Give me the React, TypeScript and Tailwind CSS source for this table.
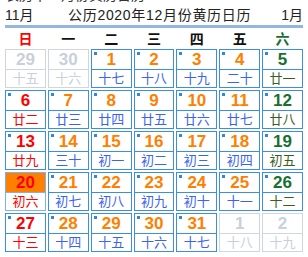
type Day = { d: number; lunar: string; other?: boolean; today?: boolean };

const lunarDec = [
  "十七", "十八", "十九", "二十", "廿一", "廿二", "廿三", "廿四", "廿五", "廿六",
  "廿七", "廿八", "廿九", "三十", "初一", "初二", "初三", "初四", "初五", "初六",
  "初七", "初八", "初九", "初十", "十一", "十二", "十三", "十四", "十五", "十六", "十七",
];

const days: Day[] = [
  { d: 29, lunar: "十五", other: true },
  { d: 30, lunar: "十六", other: true },
  ...lunarDec.map((l, i) => ({ d: i + 1, lunar: l, today: i + 1 === 20 })),
  { d: 1, lunar: "十八", other: true },
  { d: 2, lunar: "十九", other: true },
];

const weekdays = ["日", "一", "二", "三", "四", "五", "六"];

function Cell({ day, col }: { day: Day; col: number }) {
  if (day.other) {
    return (
      <div className="h-[39px] border border-[#cfd6df] flex flex-col">
        <div className="h-[19px] flex items-center justify-center text-[17px] font-bold text-[#c8d0da] leading-none">
          {day.d}
        </div>
        <div className="h-[18px] border-t border-[#cfd6df] flex items-center justify-center text-[13px] text-[#c8d0da] leading-none">
          {day.lunar}
        </div>
      </div>
    );
  }

  const numColor = col === 0 ? "text-[#ff0000]" : col === 6 ? "text-[#17702f]" : "text-[#ff8000]";
  const lunarColor = col === 0 ? "text-[#ff0000]" : col === 6 ? "text-[#3a5e1c]" : "text-[#3a63f0]";

  return (
    <div
      className={`relative h-[39px] border flex flex-col ${day.today ? "border-[#7fb0e8]" : "border-[#3a8ee8]"}`}
    >
      {!day.today && <span className="absolute left-[2px] top-[2px] w-[3px] h-[3px] bg-[#2f86e8]" />}
      <div
        className={`h-[19px] flex items-center justify-center text-[17px] font-bold leading-none ${
          day.today ? "bg-[#ff8000] text-[#ff0000]" : numColor
        }`}
      >
        {day.d}
      </div>
      <div
        className={`h-[18px] border-t flex items-center justify-center text-[13px] leading-none ${
          day.today ? "border-[#7fb0e8] text-[#ff0000]" : `border-[#3a8ee8] ${lunarColor}`
        }`}
      >
        {day.lunar}
      </div>
    </div>
  );
}

export default function App() {
  return (
    <div
      className="w-[308px] h-[257px] overflow-hidden bg-white relative"
      style={{ fontFamily: '"Liberation Sans", "Noto Sans CJK SC", sans-serif' }}
    >
      {/* previous line, scrolled mostly out of view */}
      <div className="h-[3px] overflow-hidden">
        <div className="-mt-[13px] px-[5px] text-[14px] text-[#333] leading-[16px]">农历十一月份黄历日历</div>
      </div>

      <div className="h-[22px] px-[5px] flex items-end text-[14px] text-[#222] leading-none pb-[3px]">
        <span className="w-[63px]">11月</span>
        <span className="tracking-[0.7px]">公历2020年12月份黄历日历</span>
        <span className="ml-auto">1月</span>
      </div>
      <div className="mx-[5px] h-[3px] bg-[#93b7dd]" />

      <div className="px-[5px] grid grid-cols-7 gap-x-[2px] h-[21px] items-center">
        {weekdays.map((w, i) => (
          <div
            key={w}
            className={`text-center text-[14px] font-bold leading-none ${
              i === 0 ? "text-[#ff0000]" : i === 6 ? "text-[#17702f]" : "text-[#111]"
            }`}
          >
            {w}
          </div>
        ))}
      </div>

      <div className="px-[5px] grid grid-cols-7 gap-[2px]">
        {days.map((day, i) => (
          <Cell key={i} day={day} col={i % 7} />
        ))}
      </div>
    </div>
  );
}
